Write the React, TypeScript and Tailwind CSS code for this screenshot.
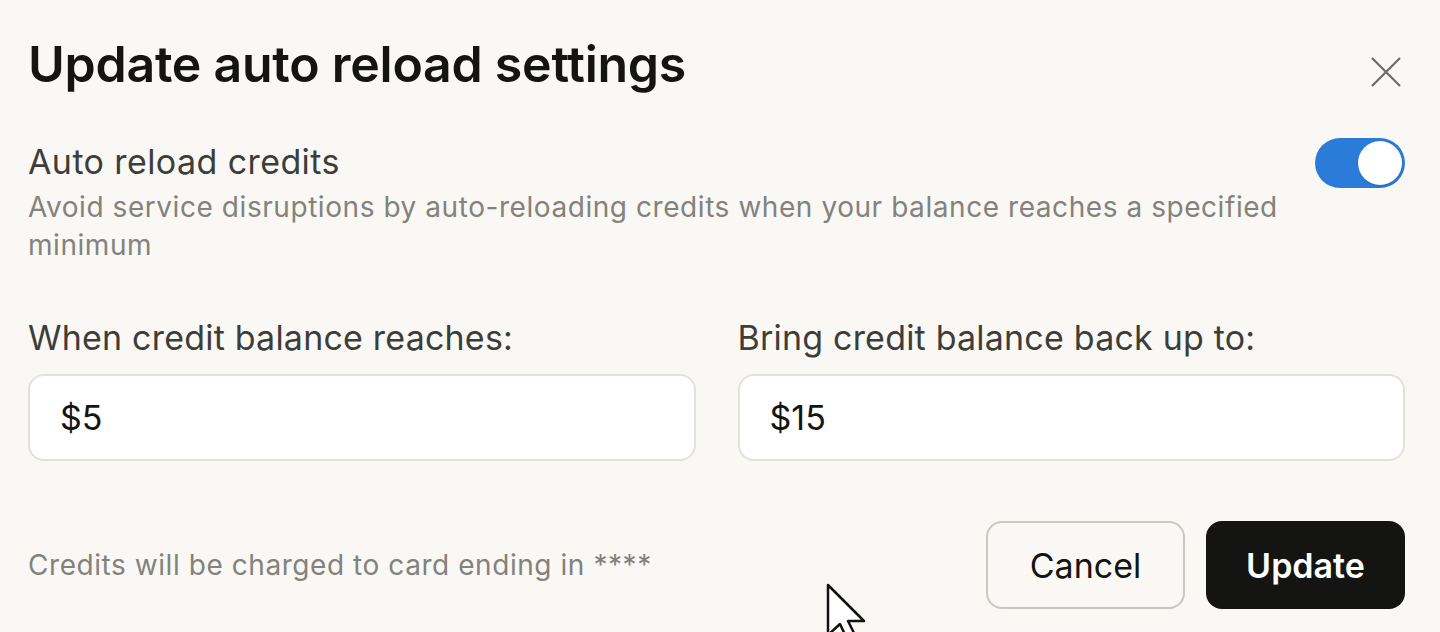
import React, { useState } from "react";

const font = { fontFamily: "Inter, 'Noto Sans', sans-serif" };

function Toggle({ on, onChange }: { on: boolean; onChange: (v: boolean) => void }) {
  return (
    <button
      onClick={() => onChange(!on)}
      aria-pressed={on}
      className={`mt-[-2px] flex h-[50px] w-[90px] shrink-0 items-center rounded-full p-[3px] transition-colors ${
        on ? "justify-end bg-[#2b7bd8]" : "justify-start bg-[#d6d3cc]"
      }`}
    >
      <span className="h-[44px] w-[44px] rounded-full bg-white shadow-sm" />
    </button>
  );
}

export default function App() {
  const [enabled, setEnabled] = useState(true);
  const [threshold, setThreshold] = useState("$5");
  const [target, setTarget] = useState("$15");

  return (
    <div className="relative min-h-[632px] overflow-hidden bg-[#f9f8f5] pl-[28px] pr-[35px] pt-[34px]" style={font}>
      <div className="flex items-start justify-between">
        <h2 className="text-[50px] font-semibold leading-[60px] tracking-[-0.005em] text-[#141413]">
          Update auto reload settings
        </h2>
        <button aria-label="Close" className="mt-[22px] mr-[3px] text-[#6b6b68]">
          <svg width="32" height="32" viewBox="0 0 32 32" fill="none" stroke="currentColor" strokeWidth="2.2">
            <path d="M2 2L30 30M30 2L2 30" />
          </svg>
        </button>
      </div>

      <div className="mt-[46px] flex items-start justify-between gap-8">
        <div>
          <div className="text-[34px] leading-[44px] tracking-[0.012em] text-[#3d3d3a]">Auto reload credits</div>
          <p className="mt-[4px] max-w-[1270px] text-[28px] leading-[38px] tracking-[0.02em] text-[#83827d]">
            Avoid service disruptions by auto-reloading credits when your balance reaches a specified minimum
          </p>
        </div>
        <Toggle on={enabled} onChange={setEnabled} />
      </div>

      <div className="mt-[52px] grid grid-cols-2 gap-[42px]">
        <label className="flex flex-col gap-[14px]">
          <span className="text-[34px] leading-[44px] tracking-[0.006em] text-[#3d3d3a]">When credit balance reaches:</span>
          <input
            value={threshold}
            onChange={(e) => setThreshold(e.target.value)}
            className="h-[87px] rounded-[16px] border-2 border-[#e3e1db] bg-white px-[30px] text-[34px] text-[#141413] outline-none"
          />
        </label>
        <label className="flex flex-col gap-[14px]">
          <span className="text-[34px] leading-[44px] tracking-[0.006em] text-[#3d3d3a]">Bring credit balance back up to:</span>
          <input
            value={target}
            onChange={(e) => setTarget(e.target.value)}
            className="h-[87px] rounded-[16px] border-2 border-[#e3e1db] bg-white px-[30px] text-[34px] text-[#141413] outline-none"
          />
        </label>
      </div>

      <div className="mt-[60px] flex items-center justify-between">
        <span className="text-[28px] tracking-[0.02em] text-[#83827d]">Credits will be charged to card ending in ****</span>
        <div className="flex gap-[21px]">
          <button className="h-[88px] w-[199px] rounded-[16px] border-2 border-[#c9c7c0] bg-transparent text-[34px] text-[#141413]">
            Cancel
          </button>
          <button className="h-[88px] w-[199px] rounded-[16px] bg-[#141413] text-[34px] font-semibold text-white">
            Update
          </button>
        </div>
      </div>

      <svg className="absolute left-[826px] top-[583px]" width="50" height="60" viewBox="0 0 50 60">
        <path d="M2 2L2 52L14 41L22 58L30 54L22 38L38 38Z" fill="white" stroke="#111" strokeWidth="2.5" strokeLinejoin="round" />
      </svg>
    </div>
  );
}
